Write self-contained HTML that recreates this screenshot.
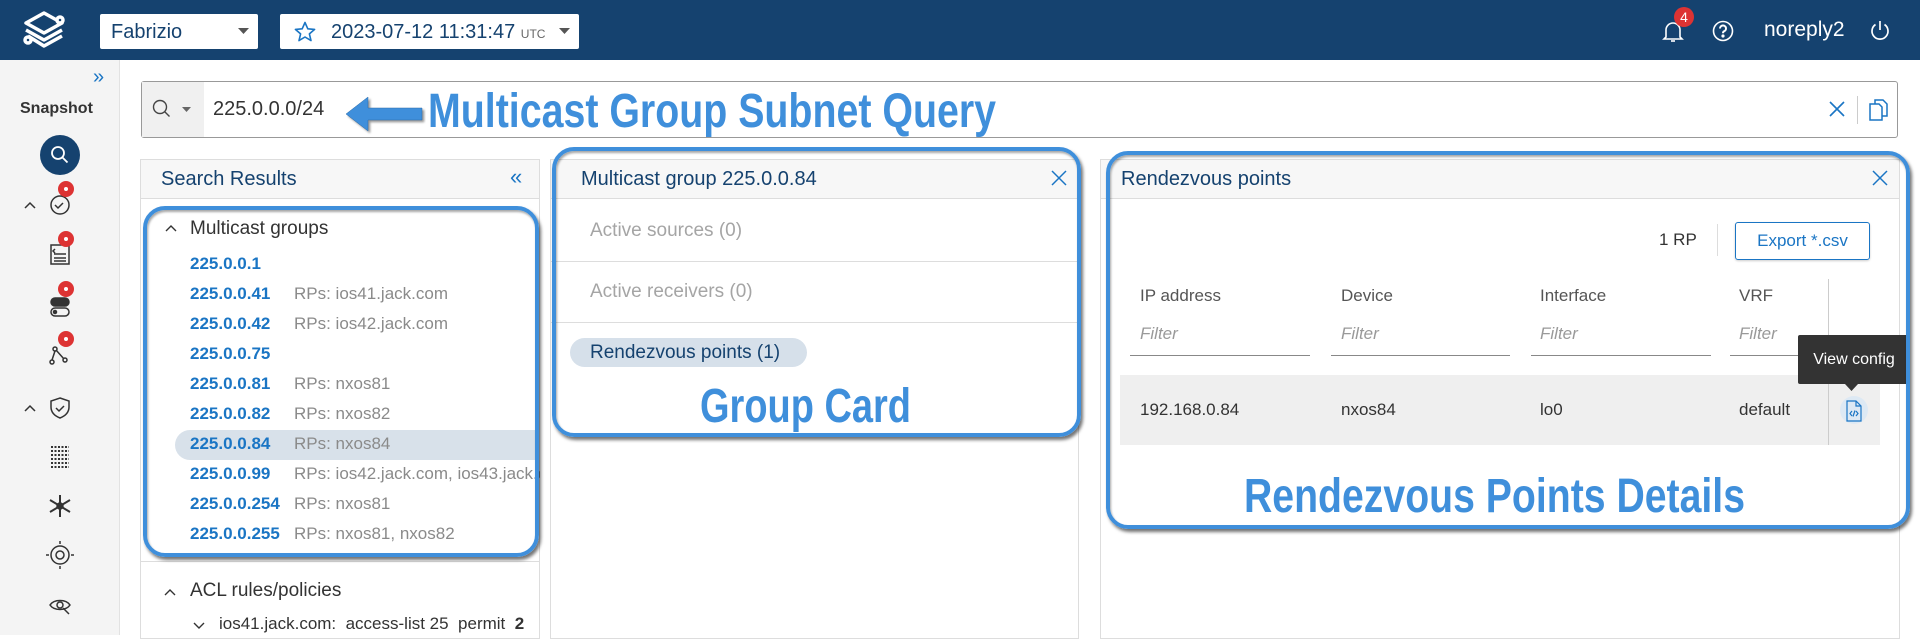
<!DOCTYPE html>
<html><head><meta charset="utf-8">
<style>
*{box-sizing:border-box;margin:0;padding:0}
body{width:1920px;height:635px;overflow:hidden;background:#fff;font-family:"Liberation Sans",sans-serif;position:relative}
.a{position:absolute}
.top{left:0;top:0;width:1920px;height:60px;background:#15426f}
.side{left:0;top:60px;width:120px;height:575px;background:#f4f4f4;border-right:1px solid #e2e2e2}
.panel{border:1px solid #ddd;background:#fff}
.hdr{background:#f7f7f7;border-bottom:1px solid #ddd;height:39px;color:#15426f;font-size:20px;line-height:39px;padding-left:20px}
.t{position:absolute;white-space:nowrap}
.blue{color:#1a75c4;font-weight:bold;font-size:17px}
.gray{color:#8a8a8a;font-size:17px}
.outl{position:absolute;border:4px solid #3f8fdb;border-radius:22px;box-shadow:2px 3px 3px rgba(0,0,0,.55), inset 1px 2px 2px rgba(0,0,0,.35)}
</style></head><body>
<div class="a top"></div>
<!-- logo -->
<svg class="a" style="left:18px;top:9px" width="52" height="44" viewBox="0 0 52 44" fill="none" stroke="#fff" stroke-width="3.5" stroke-linejoin="round">
<path d="M26 4 L44 14 L26 24 L8 14 Z"/><path d="M8 21 L26 31 L44 21"/><path d="M10 27 L26 37 L44 27"/>
<circle cx="10" cy="31" r="3" fill="#15426f"/><circle cx="42" cy="11" r="3" fill="#15426f"/>
</svg>
<div class="a" style="left:100px;top:14px;width:158px;height:35px;background:#fff;border-radius:2px"></div>
<div class="t" style="left:111px;top:21px;font-size:20px;color:#15426f">Fabrizio</div>
<svg class="a" style="left:238px;top:28px" width="12" height="8"><path d="M0 0h11l-5.5 6z" fill="#555"/></svg>
<div class="a" style="left:280px;top:14px;width:299px;height:35px;background:#fff;border-radius:2px"></div>
<svg class="a" style="left:293px;top:20px" width="24" height="24" viewBox="0 0 24 24"><path d="M12 2.5l2.8 6.3 6.8.6-5.2 4.5 1.6 6.7L12 17l-6 3.6 1.6-6.7-5.2-4.5 6.8-.6z" fill="none" stroke="#1a75c4" stroke-width="1.6" stroke-linejoin="round"/></svg>
<div class="t" style="left:331px;top:21px;font-size:20px;color:#15426f">2023-07-12&nbsp;11:31:47 <span style="font-size:12px;color:#666">UTC</span></div>
<svg class="a" style="left:559px;top:28px" width="12" height="8"><path d="M0 0h11l-5.5 6z" fill="#555"/></svg>
<!-- right top -->
<svg class="a" style="left:1661px;top:18px" width="24" height="26" viewBox="0 0 24 26" fill="none" stroke="#fff" stroke-width="1.6"><path d="M5 19V12a7 7 0 0 1 14 0v7l2 2H3z"/><path d="M10 23h4"/></svg>
<div class="a" style="left:1674px;top:7px;width:20px;height:20px;border-radius:50%;background:#d33;color:#fff;font-size:14px;text-align:center;line-height:20px">4</div>
<svg class="a" style="left:1712px;top:20px" width="22" height="22" viewBox="0 0 22 22" fill="none" stroke="#fff" stroke-width="1.6"><circle cx="11" cy="11" r="9.5"/><path d="M8 8.5a3 3 0 1 1 4 2.8c-.8.4-1 1-1 2" stroke-width="2"/><circle cx="11" cy="16" r=".8" fill="#fff"/></svg>
<div class="t" style="left:1764px;top:18px;font-size:21px;color:#fff">noreply2</div>
<svg class="a" style="left:1869px;top:19px" width="22" height="22" viewBox="0 0 22 22" fill="none" stroke="#fff" stroke-width="1.7"><path d="M6.5 5.5a8 8 0 1 0 9 0"/><path d="M11 2v9"/></svg>

<!-- sidebar -->
<div class="a side"></div>
<div class="t" style="left:93px;top:66px;font-size:20px;color:#1a75c4">»</div>
<div class="t" style="left:20px;top:100px;font-size:16px;font-weight:bold;color:#333">Snapshot</div>
<div class="a" style="left:40px;top:135px;width:40px;height:40px;border-radius:50%;background:#15426f"></div>
<svg class="a" style="left:48px;top:143px" width="24" height="24" viewBox="0 0 24 24" fill="none" stroke="#fff" stroke-width="1.8"><circle cx="10" cy="10" r="6"/><path d="M14.5 14.5l5 5"/></svg>
<svg class="a" style="left:0;top:180px" width="120" height="450" viewBox="0 0 120 450" fill="none" stroke="#333" stroke-width="1.5">
<path d="M25 28l5-5 5 5"/>
<circle cx="60" cy="25" r="9"/><path d="M55 25l3 3 5-5"/>
<rect x="51" y="65" width="18" height="19"/><path d="M54 74h12M54 78h12M54 81h12M55 69l-2 2 2 2"/>
<rect x="51" y="118" width="18" height="8" rx="4" fill="#333"/><rect x="51" y="128" width="18" height="8" rx="4"/><circle cx="55" cy="132" r="1.5" fill="#333"/>
<circle cx="52" cy="182" r="2"/><circle cx="55" cy="169" r="2"/><circle cx="65" cy="180" r="2"/><path d="M52 180l3-9M56 170l8 9"/>
<path d="M25 231l5-5 5 5"/>
<path d="M60 218l9 3v6c0 6-4 9-9 11-5-2-9-5-9-11v-6z"/><path d="M56 228l3 3 5-5"/>
<g stroke-dasharray="2 1.5" stroke-width="2"><path d="M51 267h18M51 271h18M51 275h18M51 279h18M51 283h18M51 287h18"/></g>
<path d="M60 315v22M50 320l20 12M50 332l20-12" stroke-width="2"/><circle cx="60" cy="326" r="3" fill="#333"/>
<circle cx="60" cy="375" r="9"/><circle cx="60" cy="375" r="4"/><path d="M60 364v-3M60 386v3M49 375h-3M71 375h3"/>
<path d="M50 425c4-6 16-6 20 0-4 6-16 6-20 0z"/><circle cx="60" cy="425" r="3"/><path d="M63 428l6 6"/>
</svg>
<div class="a" style="left:58px;top:181px;width:16px;height:16px;border-radius:50%;background:#d33"></div>
<div class="a" style="left:58px;top:231px;width:16px;height:16px;border-radius:50%;background:#d33"></div>
<div class="a" style="left:58px;top:281px;width:16px;height:16px;border-radius:50%;background:#d33"></div>
<div class="a" style="left:58px;top:331px;width:16px;height:16px;border-radius:50%;background:#d33"></div>
<div class="a" style="left:64px;top:187px;width:4px;height:4px;border-radius:50%;background:#fff"></div>
<div class="a" style="left:64px;top:237px;width:4px;height:4px;border-radius:50%;background:#fff"></div>
<div class="a" style="left:64px;top:287px;width:4px;height:4px;border-radius:50%;background:#fff"></div>
<div class="a" style="left:64px;top:337px;width:4px;height:4px;border-radius:50%;background:#fff"></div>

<!-- search bar -->
<div class="a" style="left:141px;top:81px;width:1757px;height:57px;border:1px solid #999;border-radius:3px;background:#fff"></div>
<div class="a" style="left:142px;top:82px;width:62px;height:55px;background:#f0f0f0"></div>
<svg class="a" style="left:151px;top:98px" width="24" height="24" viewBox="0 0 24 24" fill="none" stroke="#444" stroke-width="1.4"><circle cx="9" cy="9" r="6.5"/><path d="M13.5 13.5l5 5"/></svg>
<svg class="a" style="left:182px;top:107px" width="10" height="6"><path d="M0 0h9l-4.5 5z" fill="#666"/></svg>
<div class="t" style="left:213px;top:98px;font-size:20px;color:#333">225.0.0.0/24</div>
<svg class="a" style="left:342px;top:94px" width="84" height="42" viewBox="0 0 84 42"><path d="M4 20 L26 3 L26 14 L80 14 L80 26 L26 26 L26 37 Z" fill="#3f8fdb" stroke="#2c6aa6" stroke-width="0.5" style="filter:drop-shadow(2px 2px 1px rgba(0,0,0,.4))"/></svg>
<svg class="a" style="left:420px;top:84px" width="590" height="60"><text x="8" y="43" font-family="Liberation Sans" font-weight="bold" font-size="48" fill="#3f8fdb" textLength="568" lengthAdjust="spacingAndGlyphs">Multicast Group Subnet Query</text></svg>
<svg class="a" style="left:1827px;top:99px" width="20" height="20" viewBox="0 0 20 20" stroke="#1a75c4" stroke-width="1.6"><path d="M3 3l14 14M17 3L3 17"/></svg>
<div class="a" style="left:1857px;top:96px;width:1px;height:28px;background:#ccc"></div>
<svg class="a" style="left:1868px;top:98px" width="22" height="24" viewBox="0 0 22 24" fill="none" stroke="#1a75c4" stroke-width="1.5"><path d="M2 6h9l3 3v13H2z"/><path d="M7 6V2h8l4 4v12h-5"/></svg>

<!-- Search Results panel -->
<div class="a panel" style="left:140px;top:159px;width:400px;height:480px">
<div class="hdr">Search Results</div>
</div>
<div class="t" style="left:510px;top:164px;font-size:22px;color:#1a75c4">«</div>
<svg class="a" style="left:165px;top:224px" width="12" height="8" fill="none" stroke="#333" stroke-width="1.4"><path d="M1 7l5-5 5 5"/></svg>
<div class="t" style="left:190px;top:218px;font-size:19px;color:#333">Multicast groups</div>
<div class="a" style="left:175px;top:430px;width:365px;height:30px;background:#d8e1ea;border-radius:15px 0 0 15px"></div>
<div class="t blue" style="left:190px;top:254px">225.0.0.1</div>
<div class="t blue" style="left:190px;top:284px">225.0.0.41</div><div class="t gray" style="left:294px;top:284px">RPs: ios41.jack.com</div>
<div class="t blue" style="left:190px;top:314px">225.0.0.42</div><div class="t gray" style="left:294px;top:314px">RPs: ios42.jack.com</div>
<div class="t blue" style="left:190px;top:344px">225.0.0.75</div>
<div class="t blue" style="left:190px;top:374px">225.0.0.81</div><div class="t gray" style="left:294px;top:374px">RPs: nxos81</div>
<div class="t blue" style="left:190px;top:404px">225.0.0.82</div><div class="t gray" style="left:294px;top:404px">RPs: nxos82</div>
<div class="t blue" style="left:190px;top:434px">225.0.0.84</div><div class="t gray" style="left:294px;top:434px">RPs: nxos84</div>
<div class="a" style="left:290px;top:464px;width:250px;height:24px;overflow:hidden"><div class="t gray" style="left:4px;top:0">RPs: ios42.jack.com, ios43.jack.com</div></div>
<div class="t blue" style="left:190px;top:464px">225.0.0.99</div>
<div class="t blue" style="left:190px;top:494px">225.0.0.254</div><div class="t gray" style="left:294px;top:494px">RPs: nxos81</div>
<div class="t blue" style="left:190px;top:524px">225.0.0.255</div><div class="t gray" style="left:294px;top:524px">RPs: nxos81, nxos82</div>
<div class="a" style="left:141px;top:561px;width:398px;height:1px;background:#ddd"></div>
<svg class="a" style="left:164px;top:588px" width="12" height="8" fill="none" stroke="#333" stroke-width="1.4"><path d="M1 7l5-5 5 5"/></svg>
<div class="t" style="left:190px;top:580px;font-size:19px;color:#333">ACL rules/policies</div>
<svg class="a" style="left:193px;top:622px" width="12" height="8" fill="none" stroke="#333" stroke-width="1.4"><path d="M1 1l5 5 5-5"/></svg>
<div class="a" style="left:215px;top:614px;width:324px;height:21px;overflow:hidden"><div class="t" style="left:4px;top:0;font-size:17px;color:#333">ios41.jack.com:&nbsp; access-list 25&nbsp; permit&nbsp; <b>2</b></div></div>

<!-- Group card panel -->
<div class="a panel" style="left:550px;top:159px;width:529px;height:480px">
<div class="hdr" style="padding-left:30px">Multicast group 225.0.0.84</div>
<div class="a" style="left:0;top:101px;width:527px;height:1px;background:#ddd"></div>
<div class="a" style="left:0;top:162px;width:527px;height:1px;background:#ddd"></div>
</div>
<svg class="a" style="left:1051px;top:170px" width="16" height="16" stroke="#1a75c4" stroke-width="1.5"><path d="M1 1l14 14M15 1L1 15"/></svg>
<div class="t" style="left:590px;top:220px;font-size:19px;color:#a5a5a5">Active sources (0)</div>
<div class="t" style="left:590px;top:281px;font-size:19px;color:#a5a5a5">Active receivers (0)</div>
<div class="a" style="left:570px;top:338px;width:237px;height:29px;border-radius:15px;background:#d6e0ea"></div>
<div class="t" style="left:590px;top:342px;font-size:19px;color:#15426f">Rendezvous points (1)</div>
<svg class="a" style="left:690px;top:376px" width="230" height="60"><text x="10" y="46" font-family="Liberation Sans" font-weight="bold" font-size="48" fill="#3f8fdb" textLength="211" lengthAdjust="spacingAndGlyphs">Group Card</text></svg>

<!-- Rendezvous panel -->
<div class="a panel" style="left:1100px;top:159px;width:800px;height:480px">
<div class="hdr">Rendezvous points</div>
</div>
<svg class="a" style="left:1872px;top:170px" width="16" height="16" stroke="#1a75c4" stroke-width="1.5"><path d="M1 1l14 14M15 1L1 15"/></svg>
<div class="t" style="left:1659px;top:230px;font-size:17px;color:#333">1 RP</div>
<div class="a" style="left:1717px;top:224px;width:1px;height:32px;background:#ddd"></div>
<div class="a" style="left:1735px;top:222px;width:135px;height:38px;border:1px solid #1a75c4;border-radius:3px;color:#1a75c4;font-size:17px;text-align:center;line-height:36px;box-shadow:0 1px 2px rgba(0,0,0,.2)">Export *.csv</div>
<div class="t" style="left:1140px;top:286px;font-size:17px;color:#555">IP address</div>
<div class="t" style="left:1341px;top:286px;font-size:17px;color:#555">Device</div>
<div class="t" style="left:1540px;top:286px;font-size:17px;color:#555">Interface</div>
<div class="t" style="left:1739px;top:286px;font-size:17px;color:#555">VRF</div>
<div class="t" style="left:1140px;top:324px;font-size:17px;color:#999;font-style:italic">Filter</div>
<div class="t" style="left:1341px;top:324px;font-size:17px;color:#999;font-style:italic">Filter</div>
<div class="t" style="left:1540px;top:324px;font-size:17px;color:#999;font-style:italic">Filter</div>
<div class="t" style="left:1739px;top:324px;font-size:17px;color:#999;font-style:italic">Filter</div>
<div class="a" style="left:1130px;top:355px;width:180px;height:1px;background:#888"></div>
<div class="a" style="left:1331px;top:355px;width:179px;height:1px;background:#888"></div>
<div class="a" style="left:1531px;top:355px;width:180px;height:1px;background:#888"></div>
<div class="a" style="left:1730px;top:355px;width:75px;height:1px;background:#888"></div>
<div class="a" style="left:1120px;top:375px;width:760px;height:70px;background:#efefef"></div>
<div class="a" style="left:1828px;top:279px;width:1px;height:166px;background:#ccc"></div>
<div class="t" style="left:1140px;top:400px;font-size:17px;color:#333">192.168.0.84</div>
<div class="t" style="left:1341px;top:400px;font-size:17px;color:#333">nxos84</div>
<div class="t" style="left:1540px;top:400px;font-size:17px;color:#333">lo0</div>
<div class="t" style="left:1739px;top:400px;font-size:17px;color:#333">default</div>
<div class="a" style="left:1840px;top:396px;width:28px;height:28px;border-radius:50%;background:#dde9f4"></div>
<svg class="a" style="left:1845px;top:400px" width="18" height="22" viewBox="0 0 18 22" fill="none" stroke="#1a75c4" stroke-width="1.2"><path d="M2 1h9l5 5v15H2z"/><path d="M11 1v5h5"/><path d="M7 11l-2 2.5 2 2.5M11 11l2 2.5-2 2.5M10 10.5l-2 6"/></svg>
<div class="a" style="left:1798px;top:335px;width:112px;height:49px;background:#333;border-radius:2px;color:#fff;font-size:16px;line-height:49px;text-align:center">View config</div>
<svg class="a" style="left:1845px;top:384px" width="14" height="8"><path d="M0 0h13l-6.5 7z" fill="#333"/></svg>
<svg class="a" style="left:1236px;top:464px" width="520" height="60"><text x="8" y="48" font-family="Liberation Sans" font-weight="bold" font-size="48" fill="#3f8fdb" textLength="501" lengthAdjust="spacingAndGlyphs">Rendezvous Points Details</text></svg>

<!-- outlines -->
<div class="outl" style="left:143px;top:206px;width:396px;height:351px"></div>
<div class="outl" style="left:552px;top:147px;width:529px;height:290px"></div>
<div class="outl" style="left:1106px;top:151px;width:804px;height:378px"></div>
</body></html>
